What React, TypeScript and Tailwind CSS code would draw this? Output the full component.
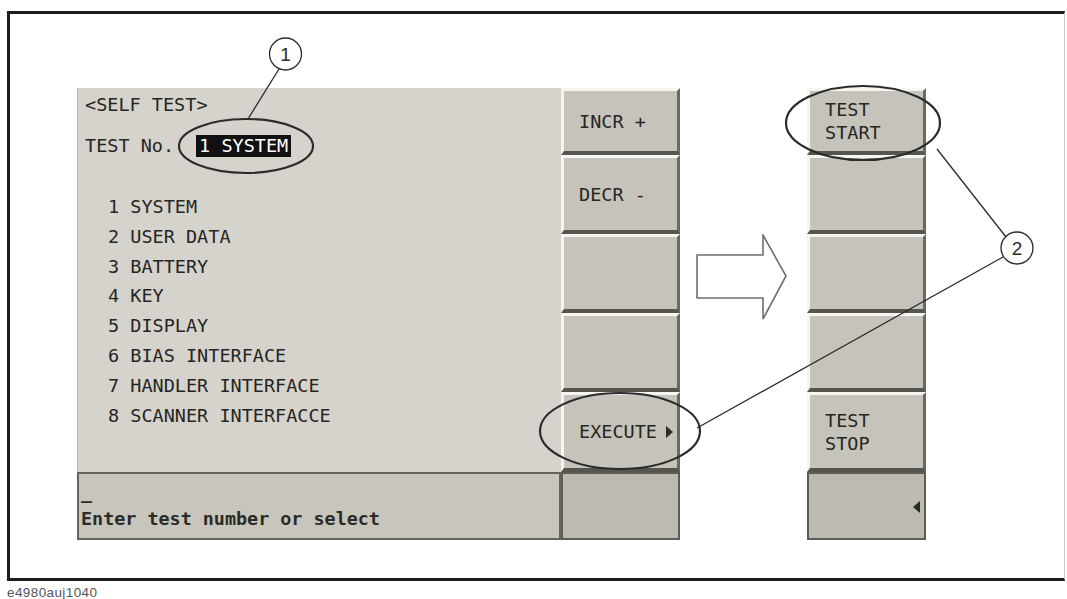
const mono = "font-['DejaVu_Sans_Mono','Liberation_Mono',monospace]";

const tests = [
  "1 SYSTEM",
  "2 USER DATA",
  "3 BATTERY",
  "4 KEY",
  "5 DISPLAY",
  "6 BIAS INTERFACE",
  "7 HANDLER INTERFACE",
  "8 SCANNER INTERFACCE",
];

const rowHeights = ["h-[67px]", "h-[79px]", "h-[79px]", "h-[79px]", "h-[80px]"];

function SoftKey({ h, lines = [], arrow = false }: { h: string; lines?: string[]; arrow?: boolean }) {
  return (
    <div
      className={`${h} relative flex items-center pl-[15px] bg-[#c6c3ba] border-t-[3px] border-l-[3px] border-t-[#f6f5f0] border-l-[#f6f5f0] border-b-[4px] border-b-[#56554e] border-r-[3px] border-r-[#6b6a62]`}
    >
      <div className={`${mono} text-[18.5px] leading-[23px] text-[#262624]`}>
        {lines.map((l) => (
          <div key={l}>{l}</div>
        ))}
      </div>
      {arrow && (
        <span className="absolute right-[4px] top-1/2 -translate-y-1/2 w-0 h-0 border-y-[6px] border-y-transparent border-l-[7px] border-l-[#2a2a28]" />
      )}
    </div>
  );
}

function FlatCell({ left = false }: { left?: boolean }) {
  return (
    <div className="relative h-[68px] w-[119px] bg-[#bdbab1] border-2 border-[#5d5c55]">
      {left && (
        <span className="absolute right-[4px] top-[27px] w-0 h-0 border-y-[6px] border-y-transparent border-r-[7px] border-r-[#2a2a28]" />
      )}
    </div>
  );
}

export default function App() {
  return (
    <div className="relative w-[1067px] h-[599px] bg-white overflow-hidden">
      <div className="ml-[7px] mt-[11px] w-[1058px] h-[570px] border-t-[3px] border-l-[3px] border-b-[3px] border-r border-t-[#1c1c1c] border-l-[#1c1c1c] border-b-[#1c1c1c] border-r-[#c8c8c8] pt-[74px] pl-[67px]">
        <div className="flex items-start">
          {/* instrument screen */}
          <div className="flex flex-col w-[603px]">
            <div className="flex">
              <div className={`w-[484px] h-[384px] bg-[#d6d3cc] border-l border-[#b9b6ad] pl-[7px] pt-[2px] ${mono} text-[18.5px] text-[#252523]`}>
                <div className="leading-[30px]">&lt;SELF TEST&gt;</div>
                <div className="mt-[11px] leading-[30px] flex items-center">
                  <span>TEST No.</span>
                  <span className="ml-[22px] bg-[#111] text-white px-[3px] leading-[22px]">1 SYSTEM</span>
                </div>
                <div className="mt-[31px] pl-[23px] leading-[29.8px]">
                  {tests.map((t) => (
                    <div key={t}>{t}</div>
                  ))}
                </div>
              </div>
              <div className="w-[119px] flex flex-col">
                <SoftKey h={rowHeights[0]} lines={["INCR +"]} />
                <SoftKey h={rowHeights[1]} lines={["DECR -"]} />
                <SoftKey h={rowHeights[2]} />
                <SoftKey h={rowHeights[3]} />
                <SoftKey h={rowHeights[4]} lines={["EXECUTE"]} arrow />
              </div>
            </div>
            <div className="flex">
              <div className={`w-[484px] h-[68px] bg-[#c8c5bc] border-2 border-[#65645c] pl-[2px] ${mono} font-bold text-[18.4px] text-[#2b2b28]`}>
                <div className="leading-[18px] mt-[10px]">_</div>
                <div className="leading-[22px] mt-[6px]">Enter test number or select</div>
              </div>
              <FlatCell />
            </div>
          </div>

          {/* arrow */}
          <svg width="92" height="88" viewBox="0 0 92 88" className="ml-[16px] mt-[146px]">
            <polygon
              points="1,21 67,21 67,1 90,42 67,85 67,64 1,64"
              fill="white"
              stroke="#6f6f6f"
              strokeWidth="1.6"
            />
          </svg>

          {/* soft keys after execute */}
          <div className="ml-[19px] w-[119px] flex flex-col">
            <SoftKey h={rowHeights[0]} lines={["TEST", "START"]} />
            <SoftKey h={rowHeights[1]} />
            <SoftKey h={rowHeights[2]} />
            <SoftKey h={rowHeights[3]} />
            <SoftKey h={rowHeights[4]} lines={["TEST", "STOP"]} />
            <FlatCell left />
          </div>
        </div>
      </div>
      <div className="ml-[7px] mt-[5px] font-['Liberation_Sans',Arial,sans-serif] text-[13.5px] leading-[14px] tracking-[0.4px] text-[#555]">
        e4980auj1040
      </div>

      {/* callouts */}
      <svg className="absolute inset-0 pointer-events-none" width="1067" height="599" viewBox="0 0 1067 599">
        <g fill="none" stroke="#2b2b2b">
          <ellipse cx="246" cy="146" rx="67" ry="27" strokeWidth="2.2" />
          <ellipse cx="863" cy="123" rx="77" ry="37" strokeWidth="2.2" />
          <ellipse cx="620" cy="431" rx="80" ry="38" strokeWidth="2.2" />
          <circle cx="285.5" cy="54" r="16" strokeWidth="1.3" />
          <circle cx="1017" cy="248" r="16" strokeWidth="1.3" />
          <line x1="279" y1="69" x2="248" y2="119" strokeWidth="1.3" />
          <line x1="1006" y1="237" x2="937" y2="149" strokeWidth="1.3" />
          <line x1="1003" y1="257" x2="697" y2="428" strokeWidth="1.3" />
        </g>
        <text x="285.5" y="61" textAnchor="middle" fontFamily="Liberation Sans, Arial, sans-serif" fontSize="19" fill="#2b2b2b">1</text>
        <text x="1017" y="255" textAnchor="middle" fontFamily="Liberation Sans, Arial, sans-serif" fontSize="19" fill="#2b2b2b">2</text>
      </svg>
    </div>
  );
}
